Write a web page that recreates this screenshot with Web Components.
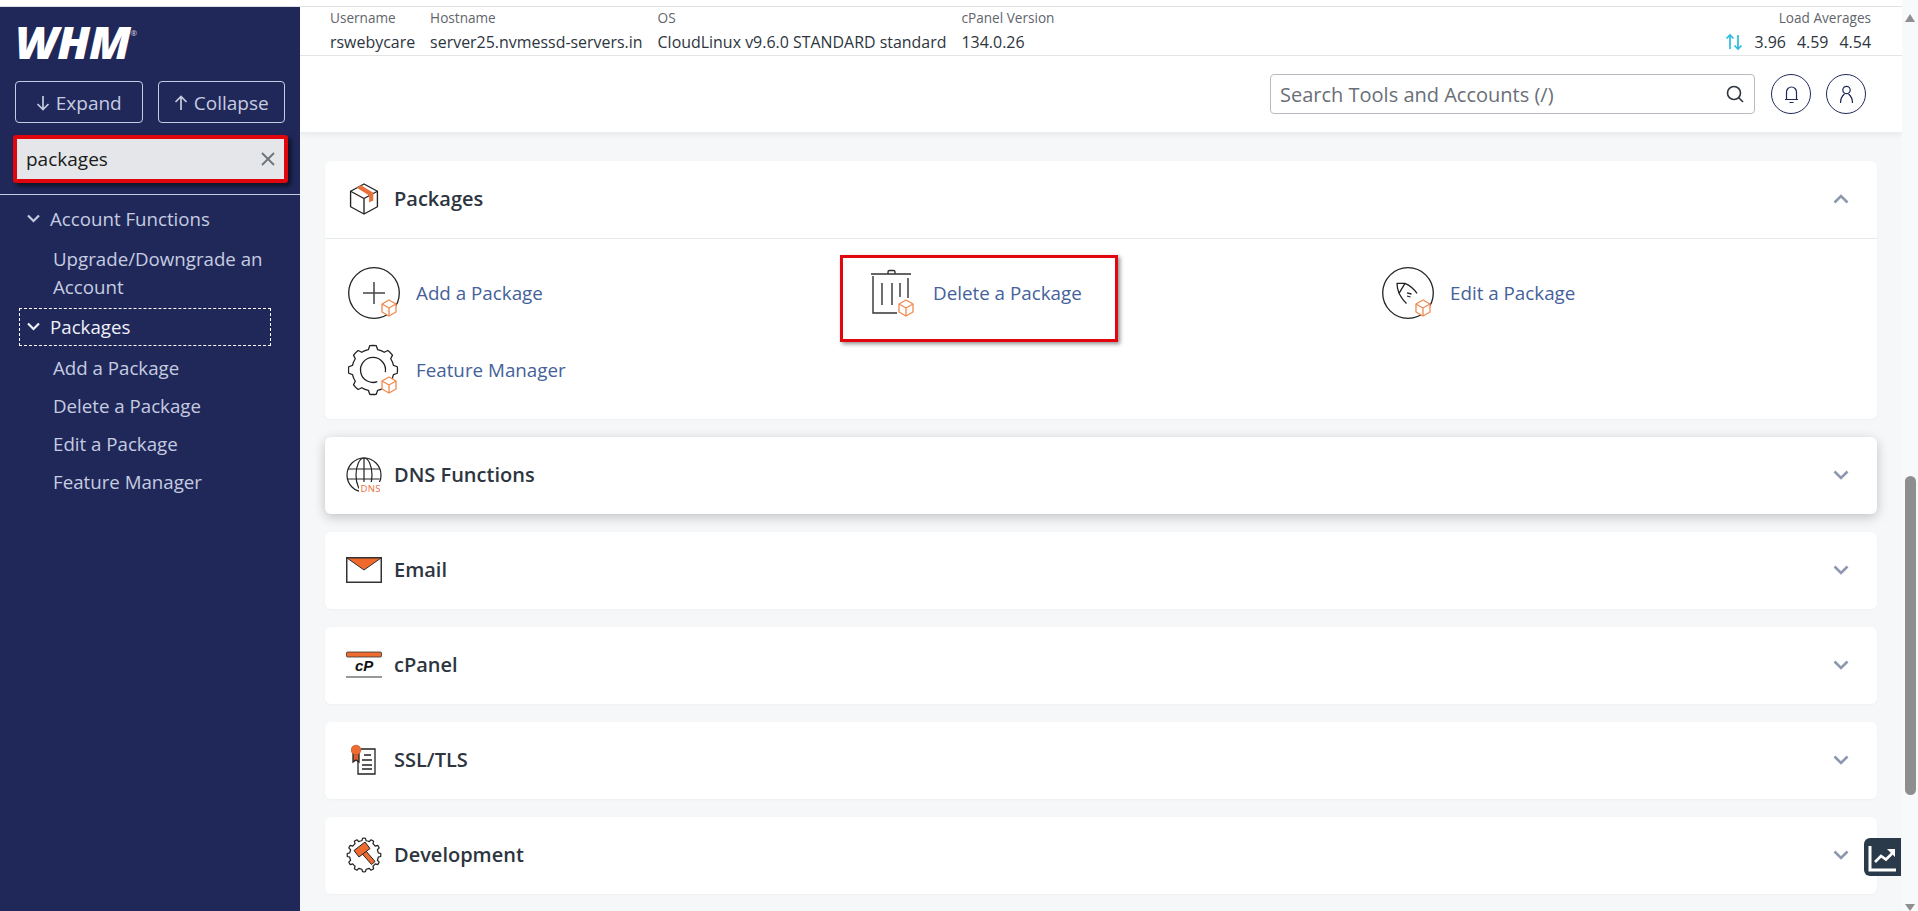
<!DOCTYPE html>
<html lang="en"><head><meta charset="utf-8"><title>WHM</title>
<style>
html,body{margin:0;height:100%;overflow:hidden}
body{font-family:"Open Sans",sans-serif;background:#f6f7f8;color:#2d3540}
</style></head>
<body>
<whm-app>
  <whm-sidebar slot="side">
    <whm-nav-group label="Account Functions" style="--end:1.5px">
      <whm-nav-link>Upgrade/Downgrade an Account</whm-nav-link>
    </whm-nav-group>
    <whm-nav-group label="Packages" focused>
      <whm-nav-link>Add a Package</whm-nav-link>
      <whm-nav-link>Delete a Package</whm-nav-link>
      <whm-nav-link>Edit a Package</whm-nav-link>
      <whm-nav-link>Feature Manager</whm-nav-link>
    </whm-nav-group>
  </whm-sidebar>
  <whm-topbar slot="top"></whm-topbar>
  <whm-card title="Packages" icon="box" open>
    <whm-tool icon="add">Add a Package</whm-tool>
    <whm-tool icon="trash" marked>Delete a Package</whm-tool>
    <whm-tool icon="edit">Edit a Package</whm-tool>
    <whm-tool icon="gear">Feature Manager</whm-tool>
  </whm-card>
  <whm-card title="DNS Functions" icon="dns" raised></whm-card>
  <whm-card title="Email" icon="mail"></whm-card>
  <whm-card title="cPanel" icon="cpanel"></whm-card>
  <whm-card title="SSL/TLS" icon="ssl"></whm-card>
  <whm-card title="Development" icon="dev"></whm-card>
  <whm-scrollbar slot="bar"></whm-scrollbar>
  <whm-chart-btn slot="float"></whm-chart-btn>
</whm-app>
<script>
const cube=(cx,cy)=>`<g fill="#fff" stroke="#ef8a50" stroke-width="1.3" stroke-linejoin="round"><path d="M${cx} ${cy-8}l7 4v8l-7 4-7-4v-8z"/><path fill="none" d="M${cx-7} ${cy-4}l7 4 7-4M${cx} ${cy}v8"/></g>`;
function gearPath(cx,cy,ro,ri,n){
  let d='';const st=2*Math.PI/n;const P=(r,a)=>`${(cx+r*Math.cos(a)).toFixed(2)} ${(cy+r*Math.sin(a)).toFixed(2)}`;
  for(let i=0;i<n;i++){const a=i*st-Math.PI/2;
    d+=(i?'L':'M')+P(ri,a-st*.28)+'L'+P(ro,a-st*.17)+'A'+ro+' '+ro+' 0 0 1 '+P(ro,a+st*.17)+'L'+P(ri,a+st*.28);
    d+='A'+ri+' '+ri+' 0 0 1 '+P(ri,a+st*.72);
  }
  return d+'Z';
}
const ICONS={
 box:`<svg width="30" height="32" viewBox="0 0 28 31" fill="none" stroke="#222" stroke-width="1.3" stroke-linejoin="round"><path d="M14 1l13 7v15l-13 7-13-7V8z"/><path d="M1 8l13 7 13-7M14 15v15"/><path fill="#e8703a" stroke="none" d="M7 4.500l4-2.300 12 7.300v7.500l-4 2v-7z"/></svg>`,
 dns:`<svg width="36" height="36" viewBox="0 0 36 36" fill="none" stroke="#222" stroke-width="1.200"><circle cx="18" cy="18" r="17"/><ellipse cx="18" cy="18" rx="8" ry="17"/><path d="M18 1v26M2 12h32M1.500 22h32"/><rect x="13" y="25" width="23" height="11" fill="#fff" stroke="none"/><text x="14.500" y="34.500" fill="#e8703a" stroke="none" font-family="Open Sans" font-size="9.500" textLength="20">DNS</text></svg>`,
 mail:`<svg width="36" height="26" viewBox="0 0 36 26"><rect x=".75" y=".75" width="34.500" height="24.500" fill="#fff" stroke="#333" stroke-width="1.500"/><path d="M1 1h34L18 13z" fill="#f0682a" stroke="#333" stroke-width="1"/></svg>`,
 cpanel:`<svg width="36" height="28" viewBox="0 0 36 28"><rect x=".5" y="1" width="35" height="5" rx="1" fill="#ee6c2f" stroke="#333" stroke-width=".8"/><text x="9" y="20" font-family="Liberation Sans" font-weight="700" font-style="italic" font-size="15" fill="#111">cP</text><path d="M0 26h36" stroke="#333" stroke-width="1.200"/></svg>`,
 ssl:`<svg width="26" height="31" viewBox="0 0 26 31" fill="none" stroke="#222" stroke-width="1.300"><path d="M10 5h14v25H7V17M13 11h7M11 16h10M11 21h10M11 25h10"/><path d="M2 9v9l3-2 3 2V9" fill="#d8602a"/><circle cx="5" cy="6" r="4.800" fill="#ee6c2f" stroke="#b2502a" stroke-width=".7"/></svg>`,
 dev:`<svg width="36" height="36" viewBox="0 0 36 36" fill="none"><path d="${gearPath(18,18,16.8,14.4,12)}" stroke="#222" stroke-width="1.200" stroke-linejoin="round"/><path d="M16 16.500L19.500 13.500 29 24.500 25.500 27.500Z" fill="#ee6c2f" stroke="#222" stroke-width="1"/><path d="M8 13.500L19 5l5 6.500-11 8.500z" fill="#ee6c2f" stroke="#222" stroke-width="1"/></svg>`,
 add:`<svg width="52" height="52" viewBox="0 0 52 52" fill="none"><circle cx="26" cy="26" r="25.300" stroke="#222" stroke-width="1.300"/><path d="M15 26h22M26 15v22" stroke="#444" stroke-width="1.500"/>${cube(41,41)}</svg>`,
 trash:`<svg width="52" height="52" viewBox="0 0 52 52" fill="none" stroke="#333" stroke-width="1.400"><path d="M6 7h40M23 7V5q0-1.500 1.500-1.500h4Q30 3.500 30 5v2M8 9v37h24M17 16v22M27 16v22M35 16v14M43 11v20"/>${cube(41,41)}</svg>`,
 edit:`<svg width="52" height="52" viewBox="0 0 52 52" fill="none"><circle cx="26" cy="26" r="25.300" stroke="#222" stroke-width="1.300"/><path d="M23 16.300H15C15 20 16 23.500 17 26.300M23 16.300L17 26.300M23 16.300C28 18.500 32 22 35 26.300M17 26.300C19 30 21 33.500 24.500 36.500M25 25.800L29.500 27M25 29L28.500 30" stroke="#222" stroke-width="1.300" stroke-linejoin="round"/>${cube(41,41)}</svg>`,
 gear:`<svg width="52" height="52" viewBox="0 0 52 52" fill="none" stroke="#222" stroke-width="1.300" stroke-linejoin="round"><path d="${gearPath(25,26,24.500,21,8)}"/><path d="M29.300 37.700A12.500 12.500 0 1 1 37.300 28.200"/>${cube(41,41)}</svg>`
};
function def(name,html,init){customElements.define(name,class extends HTMLElement{
  constructor(){super();this.attachShadow({mode:'open'}).innerHTML=typeof html==='function'?html(this):html;}
  connectedCallback(){if(init)init(this,this.shadowRoot);}
});}

def('whm-app',`<style>
:host{display:grid;grid-template-columns:300px 1fr 16px;grid-template-rows:6px 1fr;height:911px;width:1918px;overflow:hidden;position:relative}
.stripe{grid-column:1/3;background:#fff;border-bottom:1px solid #dfe1e3;box-sizing:content-box;height:6px}
.main{grid-column:2;grid-row:2;display:flex;flex-direction:column;min-height:0;overflow:hidden;margin-top:1px}
.cards{display:flex;flex-direction:column;gap:18px;padding:29px 25px 0 25px}
.side{grid-column:1;grid-row:2;display:flex;margin-top:1px}
.bar{grid-column:3;grid-row:1/3;display:flex}
</style>
<div class="stripe"></div>
<div class="side"><slot name="side"></slot></div>
<div class="main"><slot name="top"></slot><div class="cards"><slot></slot></div></div>
<div class="bar"><slot name="bar"></slot></div>
<slot name="float"></slot>`);

def('whm-sidebar',`<style>
:host{display:block;width:300px;background:#20285a;color:#c6cce0;font-size:18.700px;box-sizing:border-box}
.logo{height:74px;padding:13px 0 0 15px;box-sizing:border-box;display:flex;align-items:flex-start}
.logo b{font:italic 800 44px/44px "Open Sans",sans-serif;color:#fff;letter-spacing:-1px;display:inline-block;transform:scaleX(1.05);transform-origin:left}
.logo sup{font-size:8px;color:#d8dbe8;margin:9px 0 0 6px;line-height:8px}
.btns{display:flex;gap:15px;padding:0 15px}
.btn{flex:1;height:42px;border:1px solid #c6cce0;border-radius:4px;box-sizing:border-box;display:flex;align-items:center;justify-content:center;gap:6px;font-size:19px;color:#c6cce0;padding-top:1px}
.search{margin:12px 12px 0 13px;height:48px;box-sizing:border-box;border:4px solid #e0060e;background:#e4e6e9;border-radius:3px;box-shadow:3px 3px 5px #0009;display:flex;align-items:center;padding:0 9px 0 9px;justify-content:space-between;color:#1b1b1b;font-size:19px}
hr{border:0;border-top:1px solid #c6cce0;margin:11px 0 0}
.nav{padding-top:4px}
</style>
<div class="logo"><b>WHM</b><sup>®</sup></div>
<div class="btns">
 <div class="btn"><svg width="14" height="16" viewBox="0 0 14 16" fill="none" stroke="#c6cce0" stroke-width="1.700"><path d="M7 1v13M1.500 9L7 14.500 12.500 9"/></svg>Expand</div>
 <div class="btn"><svg width="14" height="16" viewBox="0 0 14 16" fill="none" stroke="#c6cce0" stroke-width="1.700"><path d="M7 15V2M1.500 7L7 1.500 12.500 7"/></svg>Collapse</div>
</div>
<div class="search"><span>packages</span><svg width="14" height="14" viewBox="0 0 14 14" stroke="#6e737b" stroke-width="1.800"><path d="M1 1l12 12M13 1L1 13"/></svg></div>
<hr>
<div class="nav"><slot></slot></div>`);

def('whm-nav-group',h=>`<style>
:host{display:block;padding-bottom:var(--end,0)}
.h{display:flex;align-items:center;height:38px;margin-left:19px;width:252px;box-sizing:border-box;padding-left:7px;gap:10px;border:1px dashed transparent}
:host([focused]) .h{border-color:#fff;color:#eef0f7}
.kids{padding-top:3px}
</style>
<div class="h"><svg width="13" height="9" viewBox="0 0 13 9" fill="none" stroke="currentColor" stroke-width="2.200"><path d="M1 1.500l5.500 5.500L12 1.500"/></svg><span>${h.getAttribute('label')}</span></div>
<div class="kids"><slot></slot></div>`);

def('whm-nav-link',`<style>
:host{display:block;padding:5px 30px 5px 53px;line-height:28px}
</style><slot></slot>`);

def('whm-stat',h=>`<style>
:host{display:block;margin-right:15px}
:host([end]){margin:0 0 0 auto;text-align:right}
.l{font-size:13.600px;line-height:18px;color:#5f656c}
.v{font-size:15.950px;line-height:22px;color:#2d3540;margin-top:4px;white-space:nowrap;display:flex;align-items:center;gap:0}
:host([end]) .v{justify-content:flex-end}
</style><div class="l">${h.getAttribute('label')}</div><div class="v"><slot></slot></div>`);

def('whm-topbar',`<style>
:host{display:block;background:#fff;box-shadow:0 3px 6px #0000000f;position:relative}
.info{display:flex;height:49px;box-sizing:border-box;padding:2px 31px 0 30px;border-bottom:1px solid #e3e4e6}
.tools{height:76px;display:flex;align-items:center;justify-content:flex-end;padding:9px 36px 9px 0;gap:15px;box-sizing:border-box}
.s{width:485px;height:40px;box-sizing:border-box;border:1px solid #b8bcc2;border-radius:4px;display:flex;align-items:center;justify-content:space-between;padding:0 10px 0 9px;font-size:20px;color:#6a6f76;margin-right:1px}
.c{width:40px;height:40px;border-radius:50%;border:1px solid #20285a;box-sizing:border-box;display:flex;align-items:center;justify-content:center}
.num{margin-left:11px}
</style>
<div class="info">
 <whm-stat label="Username">rswebycare</whm-stat>
 <whm-stat label="Hostname">server25.nvmessd-servers.in</whm-stat>
 <whm-stat label="OS">CloudLinux v9.6.0 STANDARD standard</whm-stat>
 <whm-stat label="cPanel Version">134.0.26</whm-stat>
 <whm-stat label="Load Averages" end><svg width="18" height="18" viewBox="0 0 18 18" fill="none" stroke="#2bbde0" stroke-width="1.700"><path d="M5 16V2M1.500 5.500L5 2l3.500 3.500M13 2v14M9.500 12.500L13 16l3.500-3.500"/></svg><span class="num">3.96</span><span class="num">4.59</span><span class="num">4.54</span></whm-stat>
</div>
<div class="tools">
 <div class="s"><span>Search Tools and Accounts (/)</span><svg width="18" height="18" viewBox="0 0 18 18" fill="none" stroke="#2d3540" stroke-width="1.600"><circle cx="8" cy="8" r="6.500"/><path d="M12.500 12.500L17 17"/></svg></div>
 <div class="c"><svg width="15" height="19" viewBox="0 0 15 19" fill="none" stroke="#20285a" stroke-width="1.200"><path d="M1 14.500h13M2.500 14.500V7a5 5 0 0 1 10 0v7.500M5.500 17.500h4"/></svg></div>
 <div class="c"><svg width="15" height="19" viewBox="0 0 15 19" fill="none" stroke="#20285a" stroke-width="1.200"><circle cx="7.500" cy="5" r="3.700"/><path d="M1.500 18c0-4 1.500-7 4-9M13.500 18c0-4-1.500-7-4-9"/></svg></div>
</div>`);

def('whm-card',h=>{const open=h.hasAttribute('open');return `<style>
:host{display:block;background:#fff;border-radius:6px;box-shadow:0 1px 3px #00000008}
:host([raised]){box-shadow:0 3px 12px #00000038}
.h{height:77px;display:flex;align-items:center;box-sizing:border-box;padding:0 28px 2px 0}
.ic{width:69px;display:flex;justify-content:center;padding-left:8px;box-sizing:border-box;flex:none}
.t{font-size:20px;font-weight:600;color:#2d3540;flex:1}
.b{display:none;border-top:1px solid #e8e9ea;padding:15px 0 11px 23px;grid-template-columns:repeat(3,517px);grid-auto-rows:77px}
:host([open]) .b{display:grid}
</style>
<div class="h"><span class="ic">${ICONS[h.getAttribute('icon')]}</span><span class="t">${h.getAttribute('title')}</span>
<svg width="16" height="10" viewBox="0 0 16 10" fill="none" stroke="#8e97b0" stroke-width="2.600"><path d="${open?'M1.500 8.500L8 2l6.500 6.500':'M1.500 1.500L8 8l6.500-6.500'}"/></svg></div>
<div class="b"><slot></slot></div>`});

def('whm-tool',h=>`<style>
:host{display:flex;align-items:center;gap:16px;position:relative;font-size:18.800px;color:#44619a}
svg{display:block;flex:none}
.mark{display:none;position:absolute;left:-25px;top:1px;width:278px;height:87px;box-sizing:border-box;border:3.500px solid #e2060e;box-shadow:2px 2px 4px #00000070;pointer-events:none}
:host([marked]) .mark{display:block}
</style>${ICONS[h.getAttribute('icon')]}<span><slot></slot></span><div class="mark"></div>`);

def('whm-scrollbar',`<style>
:host{display:flex;flex-direction:column;width:16px;background:#f8f9fa;height:911px;align-items:center}
.up{width:0;height:0;border:5.500px solid transparent;border-top:0;border-bottom:8px solid #8f8f8f;margin-top:14px}
.th{width:11px;height:319px;background:#8e8e8e;border-radius:5.500px;margin-top:454px;margin-left:1px}
.dn{width:0;height:0;border:5.500px solid transparent;border-bottom:0;border-top:7px solid #8f8f8f;margin-top:auto}
</style><div class="up"></div><div class="th"></div><div class="dn"></div>`);

def('whm-chart-btn',`<style>
:host{position:absolute;left:1864px;top:838px;width:37px;height:38px;background:#2b3a4a;border-radius:6px 0 0 6px;display:flex;align-items:center;justify-content:center}
</style><svg width="29" height="29" viewBox="0 0 29 29" fill="none" stroke="#fff"><path d="M2 3v24h26" stroke-width="3"/><path d="M7 19l6-6 5 3.500 6-6" stroke-width="2.600"/><path d="M19 6h8v8z" fill="#fff" stroke="none"/></svg>`);
</script>
</body></html>
